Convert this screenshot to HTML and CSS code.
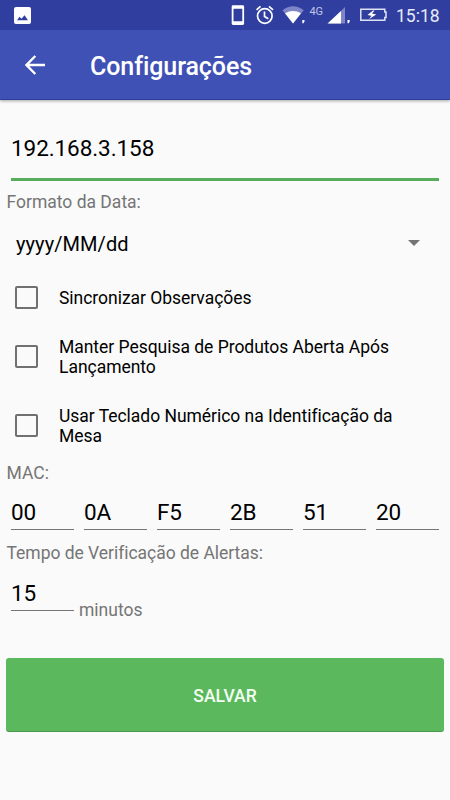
FILE: index.html
```html
<!DOCTYPE html>
<html lang="pt-BR">
<head>
<meta charset="utf-8">
<title>Configurações</title>
<link rel="stylesheet" href="styles.css">
</head>
<body>
<div class="status">
  <svg class="picture" width="17" height="17" viewBox="0 0 17 17"><path fill="#fff" fill-rule="evenodd" d="M2 0h13a2 2 0 0 1 2 2v13a2 2 0 0 1-2 2H2a2 2 0 0 1-2-2V2a2 2 0 0 1 2-2zM3 13.300h11L10.500 8.200 7.500 11.800 5.500 9.800z"/></svg>
  <svg class="tray" width="170" height="30" viewBox="0 0 170 30">
    <path fill="#fff" fill-rule="evenodd" d="M3 5.300h9.800a1.300 1.300 0 0 1 1.300 1.300v17a1.300 1.300 0 0 1-1.300 1.300H3a1.300 1.300 0 0 1-1.300-1.300v-17A1.300 1.300 0 0 1 3 5.300zM3.500 8.800v12.400h8.800V8.800z"/>
    <g fill="none" stroke="#fff" stroke-width="1.700"><circle cx="34.800" cy="16" r="7.300"/><path d="M34.500 11.500v5l3.800 2.300M26.500 9.800l4-3.500M43 9.800l-4-3.500"/></g>
    <path fill="#7e86c8" d="M52.500 10.200Q63 2.500 73.800 10.200L63 23.500z"/><path fill="#fff" d="M55 13.300Q63 8.500 71 13.300L63 23.500zM72.300 20h2.200v1.600l-1 1.700h-1.200zM117.500 20h2.200v1.600l-1 1.700h-1.200z"/>
    <path fill="#7e86c8" d="M115 7v16.500H98.500z"/><path fill="#fff" d="M111 11v12.500H97.500z"/>
    <path fill="none" stroke="#dfe2f5" stroke-width="1.500" d="M130.800 9.300h24v2.700h1.200v5.500h-1.200v2.700h-24z"/>
    <path fill="#fff" d="M143 10.500l-5.500 4.500 4 .8-2.300 3.200 7-4.600-4.200-.8 2.500-3.100z"/>
  </svg>
  <span class="network">4G</span>
  <span class="clock">15:18</span>
</div>
<header class="appbar">
  <svg width="20" height="20" viewBox="0 0 20 20"><path d="M20 10H1.800M10.300 1L1.500 10l8.800 9" fill="none" stroke="#fff" stroke-width="2.400"/></svg>
  <h1>Configurações</h1>
</header>
<main>
  <div class="field host">192.168.3.158</div>
  <div class="label">Formato da Data:</div>
  <div class="select"><span>yyyy/MM/dd</span><i class="arrow"></i></div>
  <div class="check one"><i class="box"></i><span>Sincronizar Observações</span></div>
  <div class="check"><i class="box"></i><span>Manter Pesquisa de Produtos Aberta Após<br>Lançamento</span></div>
  <div class="check"><i class="box"></i><span>Usar Teclado Numérico na Identificação da<br>Mesa</span></div>
  <div class="label mac-label">MAC:</div>
  <div class="mac">
    <div class="field">00</div><div class="field">0A</div><div class="field">F5</div><div class="field">2B</div><div class="field">51</div><div class="field">20</div>
  </div>
  <div class="label alert-label">Tempo de Verificação de Alertas:</div>
  <div class="interval"><div class="field">15</div><span class="unit">minutos</span></div>
  <button class="save">SALVAR</button>
</main>
</body>
</html>
```
FILE: styles.css
```css
* { box-sizing: border-box; }
body { margin: 0; width: 450px; height: 800px; overflow: hidden; background: #fafafa; color: #000; font-family: Roboto, sans-serif; }
.status { position: relative; display: flex; align-items: center; height: 30px; background: #303f9f; color: #fff; }
.picture { margin-left: 14px; }
.tray { margin-left: 199px; }
.network { position: absolute; left: 309.5px; top: 5px; font-size: 11px; line-height: 14px; letter-spacing: -.3px; color: #c0c5e8; }
.clock { position: absolute; left: 396px; top: 4px; font-size: 17.5px; line-height: 24px; color: #e8eaf8; }
.appbar { display: flex; align-items: center; height: 70px; padding-left: 25px; background: #3f51b5; border-bottom: 1px solid #2f3f9c; box-shadow: 0 1px 3px rgba(0,0,0,.35); }
.appbar h1 { margin: 4px 0 0 45px; color: #fff; font-size: 25px; line-height: 30px; font-weight: 500; letter-spacing: -.08px; }
main { padding: 33px 6px 0; }
.field { font-size: 22.5px; line-height: 30px; border-bottom: 1px solid #757575; letter-spacing: -.08px; }
.host { height: 48px; margin: 0 5px; border-bottom: 3px solid #58ad5d; }
.label { height: 22px; margin-top: 10px; padding-left: .5px; color: #757575; font-size: 17.5px; line-height: 22px; }
.select { display: flex; align-items: center; justify-content: space-between; height: 60px; padding: 0 24px 0 10px; font-size: 20px; letter-spacing: .08px; }
.arrow { width: 12px; height: 6px; background: #737373; clip-path: polygon(0 0, 100% 0, 50% 100%); }
.select span { padding-top: 1px; }
.check { display: flex; align-items: center; height: 69px; padding-left: 9px; gap: 21px; font-size: 17.5px; line-height: 20px; letter-spacing: -.03px; }
.check.one { height: 49px; }
.box { width: 23px; height: 23px; border: 2px solid #707070; border-radius: 2px; flex: none; }
.mac-label { margin-top: 2px; }
.mac { display: grid; grid-template-columns: repeat(6, 63px); gap: 10px; margin: 13px 5px 0; }
.mac .field { height: 33px; line-height: 31px; }
.alert-label { margin-top: 12px; letter-spacing: -.03px; }
.interval { display: flex; padding-left: 5px; margin-top: 14px; height: 43px; }
.interval .field { width: 63px; height: 33px; }
.unit { margin: 21px 0 0 5px; color: #757575; font-size: 17.5px; line-height: 22px; }
.save { display: block; width: 438px; height: 74px; margin-top: 37px; padding: 3px 0 0; border: 0; border-bottom: 1px solid #49984d; border-radius: 3px; background: #5cb85c; color: #f4fff4; font: 500 17.5px Roboto, sans-serif; }
```
